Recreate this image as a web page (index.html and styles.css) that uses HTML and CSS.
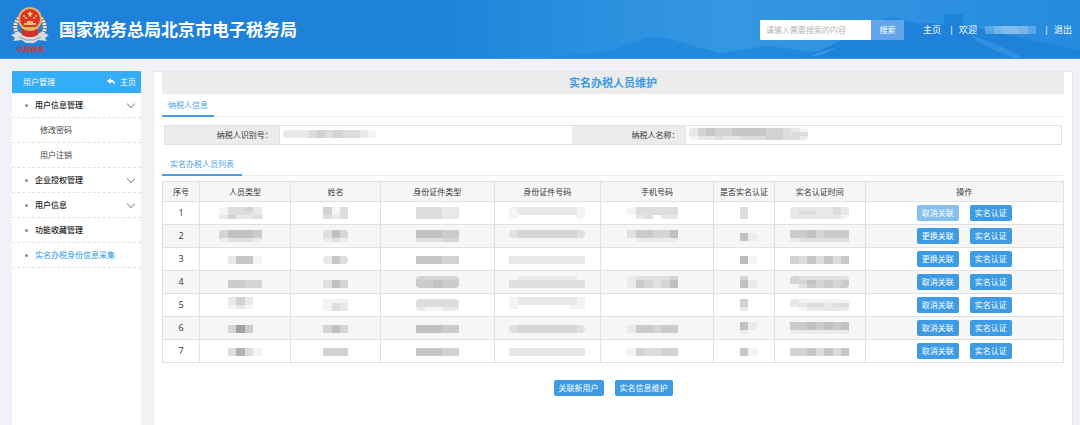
FILE: index.html
```html
<!DOCTYPE html>
<html lang="zh-CN">
<head>
    <meta charset="UTF-8">
    <meta name="viewport" content="width=device-width, initial-scale=1.0">
    <title>实名办税人员维护</title>
    <link rel="stylesheet" href="styles.css">
</head>
<body>
    <header class="header">
        <svg class="header-bg" viewBox="0 0 1080 59" preserveAspectRatio="none" aria-hidden="true">
            <defs>
                <linearGradient id="sky" x1="0" x2="1" y1="0" y2="0">
                    <stop offset="0" stop-color="#1e82da"/>
                    <stop offset="0.4" stop-color="#1e82da"/>
                    <stop offset="0.54" stop-color="#2a8fdf"/>
                    <stop offset="0.67" stop-color="#3497e2"/>
                    <stop offset="0.8" stop-color="#3093e1"/>
                    <stop offset="1" stop-color="#268adf"/>
                </linearGradient>
            </defs>
            <rect width="1080" height="59" fill="url(#sky)"/>
            <path d="M540 59 L560 55 L590 54 L615 49 L635 42 L650 37 L662 37 L682 42 L700 48 L722 53 L740 50 L765 46 L785 48 L810 52 L830 50 L840 59 Z" fill="#2389de"/>
            <path d="M800 59 L830 46 L850 36 L870 24 L884 19 L896 18 L906 21 L918 24 L930 23 L944 24 L944 14 L963 14 L963 24 L972 27 L990 31 L1010 35 L1040 42 L1080 50 L1080 59 Z" fill="#1e82da"/>
            <path d="M970 34 L985 40 L1000 46 L1022 57 L1014 58 L994 50 L978 42 Z" fill="#3c98e3" opacity="0.6"/>
            <path d="M808 57 L820 52 L838 47 L822 55 Z" fill="#4aa2e8" opacity="0.6"/>
            <rect y="58" width="1080" height="1" fill="#3c93df"/>
        </svg>
        <div class="brand">
            <svg class="emblem" viewBox="0 0 38 48" aria-hidden="true">
                <path d="M8 12 C1 20 4 30 15 34 M30 12 C37 20 34 30 23 34" fill="none" stroke="#5f6a78" stroke-width="5"/>
                <path d="M8 12 C1 20 4 30 15 34 M30 12 C37 20 34 30 23 34" fill="none" stroke="#e4e8ec" stroke-width="4" stroke-dasharray="2 1"/>
                <path d="M0 29 L8 26 L14 30 L24 30 L30 26 L38 29 L34 32 L36 35 L27 34 L23 37 L15 37 L11 34 L2 35 L4 32 Z" fill="#d9dde1"/>
                <path d="M8 31 L15 34 L23 34 L30 31" fill="none" stroke="#8d98a5" stroke-width="1"/>
                <path d="M10 22 L28 22 L27 29 L22 31 L16 31 L11 29 Z" fill="#cf3329"/>
                <circle cx="19" cy="13" r="12" fill="#e2b565"/>
                <circle cx="19" cy="13" r="10" fill="#dd3029"/>
                <path d="M19 5 L20 7 L22 7 L20 9 L21 11 L19 10 L17 11 L18 9 L16 7 L18 7 Z" fill="#f7d26b"/>
                <circle cx="13" cy="10" r="1" fill="#f7d26b"/>
                <circle cx="15" cy="12" r="1" fill="#f7d26b"/>
                <circle cx="23" cy="12" r="1" fill="#f7d26b"/>
                <circle cx="25" cy="10" r="1" fill="#f7d26b"/>
                <path d="M16 15 H22 V17 H25 V19 H13 V17 H16 Z" fill="#efc468"/>
                <path d="M11 21 H27 V23 H23 L19 25 L15 23 H11 Z" fill="#e2b565"/>
                <text x="19" y="46" text-anchor="middle" class="emblem-text">中国税务</text>
            </svg>
            <span class="brand-name">国家税务总局北京市电子税务局</span>
        </div>
        <form class="search" onsubmit="return false">
            <input class="search-input" type="text" placeholder="请输入需要搜索的内容" aria-label="搜索">
            <button class="search-button" type="submit">搜索</button>
        </form>
        <nav class="top-nav">
            <a href="#">主页</a>
            <span class="nav-group"><span>|</span><span>欢迎</span></span>
            <span class="user-mosaic" data-tones="467764/467764"></span>
            <span class="nav-group"><span>|</span><a href="#">退出</a></span>
        </nav>
    </header>

    <div class="page">
        <aside class="sidebar">
            <div class="sidebar-head">
                <span>用户管理</span>
                <a class="sidebar-home" href="#">
                    <svg width="8" height="8" viewBox="0 0 8 8" aria-hidden="true"><path d="M0 3 L4 0 V2 C7 2 8 4 8 7 C7 5 6 4 4 4 V6 Z" fill="#fff"/></svg>
                    主页
                </a>
            </div>
            <ul class="menu">
                <li><a class="menu-item open" href="#">用户信息管理</a></li>
                <li><a class="menu-sub" href="#">修改密码</a></li>
                <li><a class="menu-sub" href="#">用户注销</a></li>
                <li><a class="menu-item open" href="#">企业授权管理</a></li>
                <li><a class="menu-item open" href="#">用户信息</a></li>
                <li><a class="menu-item" href="#">功能收藏管理</a></li>
                <li><a class="menu-item active" href="#">实名办税身份信息采集</a></li>
            </ul>
        </aside>

        <main class="content">
            <h1 class="title">实名办税人员维护</h1>

            <div class="tabs"><h2 class="tab">纳税人信息</h2></div>
            <dl class="taxpayer">
                <dt>纳税人识别号：</dt>
                <dd><span class="mosaic soft" data-tones="22234343321/22234343321"></span></dd>
                <dt>纳税人名称：</dt>
                <dd><span class="mosaic soft" data-tones="24544555544321/24544555544333/12232233344332"></span></dd>
            </dl>

            <div class="tabs list-tabs"><h2 class="tab wide">实名办税人员列表</h2></div>
            <table class="people">
                <colgroup>
                    <col class="col-no">
                    <col class="col-type">
                    <col class="col-name">
                    <col class="col-idtype">
                    <col class="col-idno">
                    <col class="col-phone">
                    <col class="col-auth">
                    <col class="col-time">
                    <col>
                </colgroup>
                <thead>
                    <tr>
                        <th>序号</th>
                        <th>人员类型</th>
                        <th>姓名</th>
                        <th>身份证件类型</th>
                        <th>身份证件号码</th>
                        <th>手机号码</th>
                        <th>是否实名认证</th>
                        <th>实名认证时间</th>
                        <th>操作</th>
                    </tr>
                </thead>
                <tbody>
                    <tr>
                        <td class="no">1</td>
                        <td><span class="mosaic" data-tones="133420/133320/242230"></span></td>
                        <td><span class="mosaic" data-tones="413/413/323"></span></td>
                        <td><span class="mosaic" data-tones="33322/33322/33322"></span></td>
                        <td><span class="mosaic soft" data-tones="122222221/122222221/100000001"></span></td>
                        <td><span class="mosaic" data-tones="1333330/1333330/0230220"></span></td>
                        <td><span class="mosaic" data-tones="030/030/030"></span></td>
                        <td><span class="mosaic soft" data-tones="2222232/2332232/2222221"></span></td>
                        <td>
                            <div class="actions">
                                <button class="btn" type="button" disabled>取消关联</button>
                                <button class="btn" type="button">实名认证</button>
                            </div>
                        </td>
                    </tr>
                    <tr>
                        <td class="no">2</td>
                        <td><span class="mosaic soft" data-tones="355540/355540/122210"></span></td>
                        <td><span class="mosaic soft" data-tones="253/253/121"></span></td>
                        <td><span class="mosaic" data-tones="55544/55544/22233"></span></td>
                        <td><span class="mosaic soft up" data-tones="233333332/233333332"></span></td>
                        <td><span class="mosaic" data-tones="2443350/2443350/0111110"></span></td>
                        <td><span class="mosaic" data-tones="051/051"></span></td>
                        <td><span class="mosaic" data-tones="4453444/4453444/1222222"></span></td>
                        <td>
                            <div class="actions">
                                <button class="btn" type="button">更换关联</button>
                                <button class="btn" type="button">实名认证</button>
                            </div>
                        </td>
                    </tr>
                    <tr>
                        <td class="no">3</td>
                        <td><span class="mosaic" data-tones="025510/025510"></span></td>
                        <td><span class="mosaic soft" data-tones="253/253"></span></td>
                        <td><span class="mosaic" data-tones="55544/55544"></span></td>
                        <td><span class="mosaic" data-tones="222222222/222222222"></span></td>
                        <td></td>
                        <td><span class="mosaic" data-tones="061/061"></span></td>
                        <td><span class="mosaic" data-tones="4353535/4353535"></span></td>
                        <td>
                            <div class="actions">
                                <button class="btn" type="button">更换关联</button>
                                <button class="btn" type="button">实名认证</button>
                            </div>
                        </td>
                    </tr>
                    <tr>
                        <td class="no">4</td>
                        <td><span class="mosaic" data-tones="000000/044330/044330"></span></td>
                        <td><span class="mosaic" data-tones="000/253/253"></span></td>
                        <td><span class="mosaic soft" data-tones="33333/44544/44544"></span></td>
                        <td><span class="mosaic" data-tones="011111110/222222222/222222222"></span></td>
                        <td><span class="mosaic soft" data-tones="1222230/1432350/1432350"></span></td>
                        <td><span class="mosaic" data-tones="030/051/051"></span></td>
                        <td><span class="mosaic soft" data-tones="3222222/3353434/0243434"></span></td>
                        <td>
                            <div class="actions">
                                <button class="btn" type="button">取消关联</button>
                                <button class="btn" type="button">实名认证</button>
                            </div>
                        </td>
                    </tr>
                    <tr>
                        <td class="no">5</td>
                        <td><span class="mosaic up" data-tones="024200/024200/012100"></span></td>
                        <td><span class="mosaic" data-tones="111/132/132"></span></td>
                        <td><span class="mosaic soft" data-tones="33333/33333/21122"></span></td>
                        <td><span class="mosaic up" data-tones="122222221/122222221/100000011"></span></td>
                        <td></td>
                        <td><span class="mosaic" data-tones="040/040/020"></span></td>
                        <td><span class="mosaic soft" data-tones="2111111/2233233/0122222"></span></td>
                        <td>
                            <div class="actions">
                                <button class="btn" type="button">取消关联</button>
                                <button class="btn" type="button">实名认证</button>
                            </div>
                        </td>
                    </tr>
                    <tr>
                        <td class="no">6</td>
                        <td><span class="mosaic" data-tones="038400/038400"></span></td>
                        <td><span class="mosaic" data-tones="353/353"></span></td>
                        <td><span class="mosaic" data-tones="55544/55544"></span></td>
                        <td><span class="mosaic soft" data-tones="233333332/233333332"></span></td>
                        <td><span class="mosaic" data-tones="1443440/1443440"></span></td>
                        <td><span class="mosaic" data-tones="051/051/010"></span></td>
                        <td><span class="mosaic" data-tones="4454545/4454545/1111111"></span></td>
                        <td>
                            <div class="actions">
                                <button class="btn" type="button">取消关联</button>
                                <button class="btn" type="button">实名认证</button>
                            </div>
                        </td>
                    </tr>
                    <tr>
                        <td class="no">7</td>
                        <td><span class="mosaic" data-tones="037310/037310"></span></td>
                        <td><span class="mosaic" data-tones="444/444"></span></td>
                        <td><span class="mosaic" data-tones="55544/55544"></span></td>
                        <td><span class="mosaic" data-tones="222222222/222222222"></span></td>
                        <td><span class="mosaic" data-tones="1433440/1433440"></span></td>
                        <td><span class="mosaic" data-tones="051/051"></span></td>
                        <td><span class="mosaic" data-tones="4453535/4453535"></span></td>
                        <td>
                            <div class="actions">
                                <button class="btn" type="button">取消关联</button>
                                <button class="btn" type="button">实名认证</button>
                            </div>
                        </td>
                    </tr>
                </tbody>
            </table>

            <div class="footer-actions">
                <button class="btn" type="button">关联新用户</button>
                <button class="btn" type="button">实名信息维护</button>
            </div>
        </main>
    </div>

    <script src="script.js"></script>
</body>
</html>
```

FILE: styles.css
```css
* {
    box-sizing: border-box;
}
body {
    display: flex;
    flex-direction: column;
    min-height: 100vh;
    margin: 0;
    background-color: #f0f2f5;
    color: #333;
    font-family: "Open Sans", "Noto Sans CJK SC", sans-serif;
    font-size: 8px;
    line-height: 12px;
}
a {
    color: inherit;
    text-decoration: none;
}
button, input {
    font-family: inherit;
    font-size: 8px;
    line-height: 12px;
}
svg {
    display: block;
}

/* Header */
.header {
    position: relative;
    display: flex;
    align-items: center;
    height: 59px;
    padding: 0 8px 0 11px;
    color: #fff;
}
.header-bg {
    position: absolute;
    top: 0;
    left: 0;
    z-index: -1;
    width: 100%;
    height: 100%;
}
.brand {
    display: flex;
    align-items: center;
    gap: 10px;
    margin-right: auto;
}
.emblem {
    width: 38px;
    height: 48px;
}
.emblem-text {
    fill: #d8342c;
    font-size: 7px;
    font-weight: bold;
    font-style: italic;
}
.brand-name {
    font-size: 17px;
    font-weight: bold;
    line-height: 24px;
}
.search {
    display: flex;
    height: 20px;
    margin-right: 19px;
}
.search-input {
    width: 111px;
    padding: 0 6px;
    border: 0;
    border-radius: 1px 0 0 1px;
    background-color: #fff;
    color: #333;
}
.search-input::placeholder {
    color: #b5b5b5;
    opacity: 1;
}
.search-button {
    width: 33px;
    padding: 0;
    border: 0;
    border-radius: 0 1px 1px 0;
    background-color: #63a5e8;
    color: #fff;
}
.top-nav {
    display: flex;
    align-items: center;
    gap: 8px;
    font-size: 9px;
}
.nav-group {
    display: flex;
    gap: 5px;
}
.user-mosaic {
    color: #fff;
}

/* Page layout */
.page {
    display: flex;
    flex: 1;
    gap: 12px;
    padding: 12px 7px 0 12px;
}

/* Sidebar */
.sidebar {
    width: 129px;
    flex-shrink: 0;
    background-color: #fff;
}
.sidebar-head {
    display: flex;
    align-items: center;
    justify-content: space-between;
    height: 22px;
    padding: 0 5px 0 11px;
    border-radius: 1px 1px 0 0;
    background-color: #33adf5;
    color: #fff;
}
.sidebar-home {
    display: flex;
    align-items: center;
    gap: 5px;
}
.menu {
    margin: 0;
    padding: 0;
    list-style: none;
}
.menu li {
    border-bottom: 1px dashed #e2e2e2;
}
.menu-item, .menu-sub {
    display: flex;
    align-items: center;
    height: 24px;
}
.menu-item {
    padding: 0 7px 0 13px;
    color: #222;
    font-weight: 500;
}
.menu-item::before {
    content: "";
    width: 3px;
    height: 3px;
    margin-right: 7px;
    border-radius: 50%;
    background-color: #888;
}
.menu-item.open::after {
    content: "";
    width: 5px;
    height: 5px;
    margin: 0 0 3px auto;
    border: solid #999;
    border-width: 0 1px 1px 0;
    transform: rotate(45deg);
}
.menu-item.active {
    color: #2d9ae8;
    font-weight: normal;
}
.menu-sub {
    padding-left: 28px;
    color: #444;
}

/* Content */
.content {
    flex: 1;
    min-width: 0;
    padding: 0 8px 28px;
    border: 1px solid #e6e8ea;
    border-bottom: 0;
    background-color: #fff;
}
.title {
    margin: 0;
    background-color: #ececec;
    color: #3d9be6;
    font-size: 11px;
    font-weight: bold;
    line-height: 22px;
    text-align: center;
}
.tabs {
    display: flex;
    height: 23px;
    box-shadow: inset 0 -1px #eee;
}
.tab {
    margin: 0;
    padding: 0 6px;
    border-bottom: 2px solid #4a9fe3;
    color: #4a9fe3;
    font-size: 8px;
    font-weight: normal;
    line-height: 22px;
}
.tab.wide {
    padding: 0 8px;
}
.list-tabs {
    margin-top: 8px;
}
.taxpayer {
    display: grid;
    grid-template-columns: 115fr 292fr 115fr 375fr;
    height: 20px;
    margin: 8px 2px 0;
    border: 1px solid #e2e2e2;
}
.taxpayer dt {
    padding-right: 6px;
    border-right: 1px solid #e2e2e2;
    background-color: #ececec;
    line-height: 18px;
    text-align: right;
}
.taxpayer dd {
    margin: 0;
    padding: 1px 0 0 3px;
}

.people {
    width: 100%;
    margin-top: 5px;
    border-collapse: collapse;
    table-layout: fixed;
}
.people th, .people td {
    height: 23px;
    padding: 0;
    border: 1px solid #dfe1e3;
    text-align: center;
}
.people th {
    height: 20px;
    background-color: #f6f6f6;
    font-weight: normal;
}
.people tbody tr:nth-child(even) {
    background-color: #f6f6f6;
}
.people .no {
    font-size: 9px;
}
.col-no { width: 4.1%; }
.col-type { width: 10.1%; }
.col-name { width: 10%; }
.col-idtype { width: 12.6%; }
.col-idno { width: 11.8%; }
.col-phone { width: 12.6%; }
.col-auth { width: 6.7%; }
.col-time { width: 10.1%; }

.mosaic {
    display: inline-block;
    vertical-align: middle;
    overflow: hidden;
    color: #444;
}
.mosaic.soft {
    border-radius: 4px;
}
.mosaic.up {
    margin-bottom: 4px;
}

.actions, .footer-actions {
    display: flex;
    justify-content: center;
    gap: 11px;
}
.footer-actions {
    margin-top: 17px;
}
.btn {
    height: 16px;
    padding: 0 5px;
    border: 0;
    border-radius: 2px;
    background-color: #3d9be6;
    color: #fff;
}
.btn:disabled {
    background-color: #85c0ee;
}
```

FILE: script.js
```js
// Draws the masked values: each digit in data-tones is the strength of one block
const BLOCK_WIDTH = 8.5;
const BLOCK_HEIGHT = 4;

document.querySelectorAll('[data-tones]').forEach(element => {
    const rows = element.dataset.tones.split('/');
    const width = rows[0].length * BLOCK_WIDTH;
    const height = rows.length * BLOCK_HEIGHT;
    let rects = '';

    rows.forEach((row, y) => {
        [...row].forEach((tone, x) => {
            rects += `<rect x="${x * BLOCK_WIDTH}" y="${y * BLOCK_HEIGHT}" width="${BLOCK_WIDTH}" height="${BLOCK_HEIGHT}" opacity="${tone * 0.06}"/>`;
        });
    });

    element.innerHTML = `<svg width="${width}" height="${height}" fill="currentColor" shape-rendering="crispEdges">${rects}</svg>`;
});
```
